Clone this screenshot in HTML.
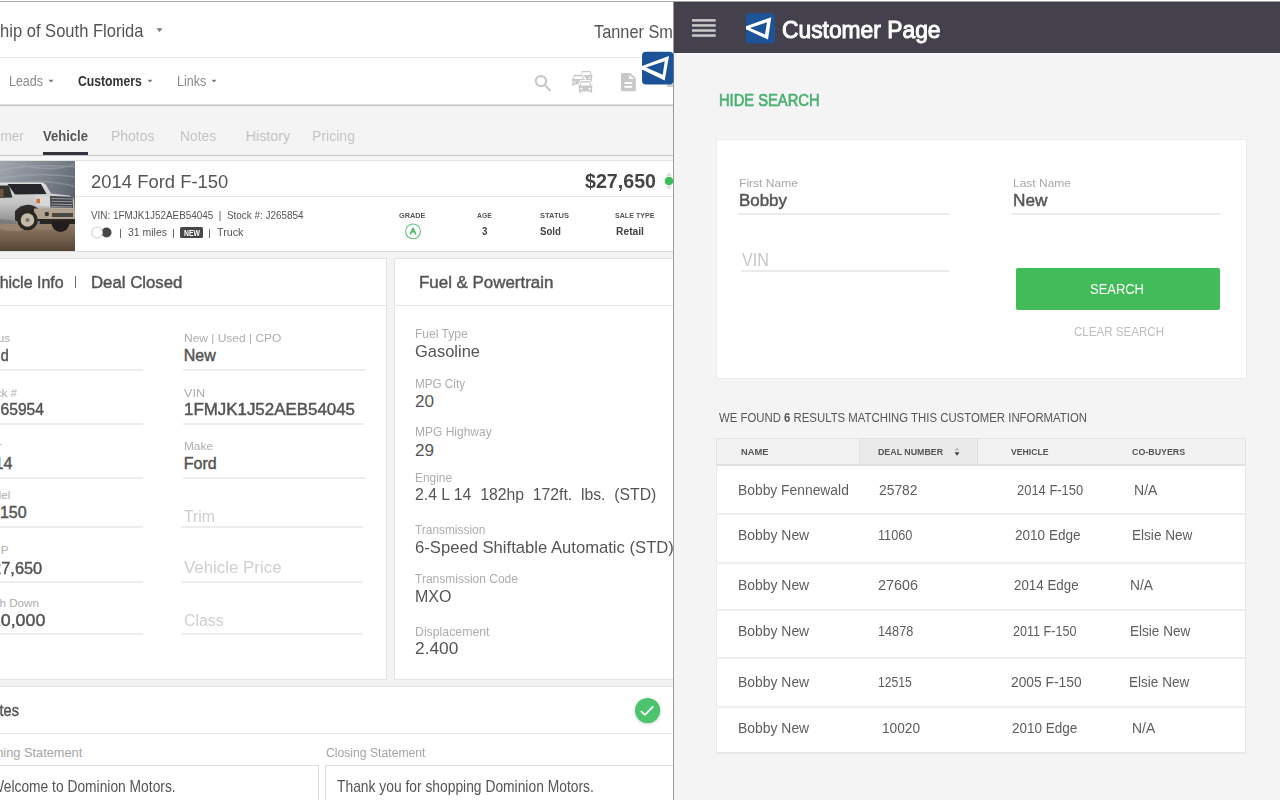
<!DOCTYPE html>
<html><head><meta charset="utf-8"><style>
html,body{margin:0;padding:0;width:1280px;height:800px;overflow:hidden;background:#fff;}
body{position:relative;font-family:"Liberation Sans",sans-serif;}
.r{position:absolute;}
.t{position:absolute;white-space:nowrap;line-height:1;}
</style></head><body>
<div class="r" style="left:0px;top:0px;width:1280px;height:800px;background:#ffffff;"></div>
<div class="r" style="left:0px;top:1px;width:1280px;height:1px;background:#a6a6a6;"></div>
<div class="t" style="left:-57.02px;top:23.00px;font-size:17.75px;color:#555;transform:scaleX(0.9322);transform-origin:0 0;">Dealership of South Florida</div>
<svg class="r" style="left:155px;top:27px" width="9" height="6"><path d="M1.5 1.3 L7.5 1.3 L4.5 5 Z" fill="#777"/></svg>
<div class="t" style="left:593.60px;top:23.00px;font-size:18.60px;color:#555;transform:scaleX(0.8783);transform-origin:0 0;">Tanner Smith</div>
<div class="r" style="left:0px;top:57px;width:673px;height:1px;background:#e8e8e8;"></div>
<div class="t" style="left:9.30px;top:75.00px;font-size:13.95px;color:#8a8a8a;transform:scaleX(0.8945);transform-origin:0 0;">Leads</div>
<div class="t" style="left:77.80px;top:75.00px;font-size:13.95px;color:#333;font-weight:bold;transform:scaleX(0.8755);transform-origin:0 0;">Customers</div>
<div class="t" style="left:176.60px;top:75.00px;font-size:13.95px;color:#8a8a8a;transform:scaleX(0.8966);transform-origin:0 0;">Links</div>
<svg class="r" style="left:48px;top:79px" width="6" height="4"><path d="M0.5 0.8 L5.5 0.8 L3 3.6 Z" fill="#777"/></svg>
<svg class="r" style="left:146.7px;top:79px" width="6" height="4"><path d="M0.5 0.8 L5.5 0.8 L3 3.6 Z" fill="#777"/></svg>
<svg class="r" style="left:210.7px;top:79px" width="6" height="4"><path d="M0.5 0.8 L5.5 0.8 L3 3.6 Z" fill="#777"/></svg>
<div class="r" style="left:0px;top:104px;width:673px;height:1px;background:#dedede;"></div>
<div class="r" style="left:0px;top:105px;width:673px;height:1px;background:#c6c6c6;"></div>
<div class="r" style="left:0px;top:106px;width:673px;height:49px;background:#f4f4f4;"></div>
<div class="t" style="left:-35.49px;top:129.00px;font-size:14.25px;color:#c4c4c4;transform:scaleX(0.9535);transform-origin:0 0;">Customer</div>
<div class="t" style="left:43.30px;top:129.00px;font-size:14.25px;color:#555;font-weight:bold;transform:scaleX(0.9141);transform-origin:0 0;">Vehicle</div>
<div class="t" style="left:110.50px;top:129.00px;font-size:14.25px;color:#c4c4c4;transform:scaleX(0.9805);transform-origin:0 0;">Photos</div>
<div class="t" style="left:179.80px;top:129.00px;font-size:14.25px;color:#c4c4c4;transform:scaleX(0.9724);transform-origin:0 0;">Notes</div>
<div class="t" style="left:245.70px;top:129.00px;font-size:14.25px;color:#c4c4c4;">History</div>
<div class="t" style="left:312.00px;top:129.00px;font-size:14.25px;color:#c4c4c4;transform:scaleX(0.9872);transform-origin:0 0;">Pricing</div>
<div class="r" style="left:43px;top:152px;width:45px;height:3px;background:#33333d;"></div>
<div class="r" style="left:0px;top:155px;width:673px;height:1px;background:#c9c9c9;"></div>
<div class="r" style="left:0px;top:156px;width:673px;height:644px;background:#f3f3f3;"></div>
<div class="r" style="left:0px;top:156px;width:673px;height:4px;background:#f7f7f7;"></div>
<svg class="r" style="left:530px;top:70px" width="24" height="24" viewBox="0 0 24 24">
<circle cx="10.95" cy="11.1" r="5.2" fill="none" stroke="#c6c6c6" stroke-width="2"/>
<path d="M14.8 15 L20 20.2" stroke="#c6c6c6" stroke-width="2" stroke-linecap="round"/></svg>
<svg class="r" style="left:565px;top:66px" width="35" height="30" viewBox="565 66 35 30">
<g transform="translate(579.6,71) scale(0.9)"><path d="M3.2 0 L11.2 0 Q12 0 12.3 0.8 L13.3 4.4 L14.4 4.4 L14.4 5.8 L13.8 5.8 L13.8 11.8 L11.8 11.8 L11.8 10.4 L2.6 10.4 L2.6 11.8 L0.6 11.8 L0.6 5.8 L0 5.8 L0 4.4 L1.1 4.4 L2.1 0.8 Q2.4 0 3.2 0 Z M3 1.5 L11.4 1.5 L12.2 4.4 L2.2 4.4 Z M1.8 7 L4.2 7.3 L4.2 8.6 L1.8 8.4 Z M12.6 7 L10.2 7.3 L10.2 8.6 L12.6 8.4 Z" fill="#c9c9c9" fill-rule="evenodd"/></g><g transform="translate(571.7,74.8) scale(0.93)"><path d="M3.2 0 L11.2 0 Q12 0 12.3 0.8 L13.3 4.4 L14.4 4.4 L14.4 5.8 L13.8 5.8 L13.8 11.8 L11.8 11.8 L11.8 10.4 L2.6 10.4 L2.6 11.8 L0.6 11.8 L0.6 5.8 L0 5.8 L0 4.4 L1.1 4.4 L2.1 0.8 Q2.4 0 3.2 0 Z" fill="#fff" stroke="#fff" stroke-width="2.37" stroke-linejoin="round"/><path d="M3.2 0 L11.2 0 Q12 0 12.3 0.8 L13.3 4.4 L14.4 4.4 L14.4 5.8 L13.8 5.8 L13.8 11.8 L11.8 11.8 L11.8 10.4 L2.6 10.4 L2.6 11.8 L0.6 11.8 L0.6 5.8 L0 5.8 L0 4.4 L1.1 4.4 L2.1 0.8 Q2.4 0 3.2 0 Z M3 1.5 L11.4 1.5 L12.2 4.4 L2.2 4.4 Z M1.8 7 L4.2 7.3 L4.2 8.6 L1.8 8.4 Z M12.6 7 L10.2 7.3 L10.2 8.6 L12.6 8.4 Z" fill="#c9c9c9" fill-rule="evenodd"/></g><g transform="translate(578.3,81) scale(1.0)"><path d="M3.2 0 L11.2 0 Q12 0 12.3 0.8 L13.3 4.4 L14.4 4.4 L14.4 5.8 L13.8 5.8 L13.8 11.8 L11.8 11.8 L11.8 10.4 L2.6 10.4 L2.6 11.8 L0.6 11.8 L0.6 5.8 L0 5.8 L0 4.4 L1.1 4.4 L2.1 0.8 Q2.4 0 3.2 0 Z" fill="#fff" stroke="#fff" stroke-width="2.20" stroke-linejoin="round"/><path d="M3.2 0 L11.2 0 Q12 0 12.3 0.8 L13.3 4.4 L14.4 4.4 L14.4 5.8 L13.8 5.8 L13.8 11.8 L11.8 11.8 L11.8 10.4 L2.6 10.4 L2.6 11.8 L0.6 11.8 L0.6 5.8 L0 5.8 L0 4.4 L1.1 4.4 L2.1 0.8 Q2.4 0 3.2 0 Z M3 1.5 L11.4 1.5 L12.2 4.4 L2.2 4.4 Z M1.8 7 L4.2 7.3 L4.2 8.6 L1.8 8.4 Z M12.6 7 L10.2 7.3 L10.2 8.6 L12.6 8.4 Z" fill="#c9c9c9" fill-rule="evenodd"/></g></svg>
<svg class="r" style="left:621px;top:73px" width="16" height="19" viewBox="0 0 16 19">
<path d="M1.3 0 L9.3 0 L14.8 5.3 L14.8 17 Q14.8 18.3 13.5 18.3 L1.3 18.3 Q0 18.3 0 17 L0 1.3 Q0 0 1.3 0 Z" fill="#c8c8c8"/>
<path d="M8.1 1.7 L8.1 6.1 L12.9 6.1 Z" fill="#fff"/>
<rect x="3.5" y="9.1" width="7.7" height="1.9" fill="#fff"/><rect x="3.5" y="12.9" width="7.7" height="1.9" fill="#fff"/></svg>
<div class="r" style="left:667px;top:84px;width:6px;height:3px;background:#d0d0d0;"></div>
<div class="r" style="left:0px;top:160px;width:673px;height:92px;background:#ffffff;border-top:1px solid #e2e2e2;border-bottom:1px solid #dcdcdc;box-sizing:border-box;"></div>
<svg class="r" style="left:0;top:161px" width="75" height="90" viewBox="0 0 75 90">
<defs>
<linearGradient id="sky" x1="0" y1="0" x2="1" y2="0.7"><stop offset="0" stop-color="#a3a8b0"/><stop offset="0.5" stop-color="#7d838d"/><stop offset="1" stop-color="#4b5260"/></linearGradient>
<linearGradient id="gnd" x1="0" y1="0" x2="0" y2="1"><stop offset="0" stop-color="#8d7964"/><stop offset="0.45" stop-color="#76634f"/><stop offset="1" stop-color="#4f3f31"/></linearGradient>
<linearGradient id="body" x1="0" y1="0" x2="0" y2="1"><stop offset="0" stop-color="#dedede"/><stop offset="0.55" stop-color="#c2c2c2"/><stop offset="1" stop-color="#8f8f8f"/></linearGradient>
<filter id="bl" x="-10%" y="-10%" width="120%" height="120%"><feGaussianBlur stdDeviation="0.45"/></filter>
</defs>
<g filter="url(#bl)">
<rect x="-2" y="-2" width="79" height="94" fill="url(#sky)"/>
<path d="M-2 10 Q30 2 77 6 M-2 18 Q35 10 77 16 M10 24 Q40 16 77 26 M20 4 Q55 12 77 2" stroke="#b0b5bc" stroke-width="1.5" fill="none" opacity="0.4"/>
<rect x="-2" y="63" width="79" height="29" fill="url(#gnd)"/>
<ellipse cx="14" cy="66" rx="16" ry="4" fill="#9c8a74" opacity="0.8"/>
<ellipse cx="45" cy="66" rx="12" ry="3" fill="#97846f" opacity="0.7"/>
<path d="M-2 21.5 L42 21.5 Q44 21.5 46 24 L51 32.5 L69 34.5 Q73.5 35.5 74 39 L75 58 L-2 61 Z" fill="url(#body)"/>
<path d="M7.5 23 L41 23 L46.5 33 L15 33.5 Z" fill="#25272b"/>
<path d="M-2 24.5 L9 24.5 L12.5 36.5 L-2 37 Z" fill="#33322f"/>
<path d="M-2 28 L3.5 28 L3.5 36.5 L-2 36.5 Z" fill="#6d5642"/>
<path d="M35 34.5 L49.5 35 L50 45.5 L37 44.5 Z" fill="#d8d8d8"/>
<path d="M36.5 37.8 L40 37.8 L40 42.6 L36.5 42 Z" fill="#cf6f2c"/>
<path d="M50 35 L72.5 35.8 L73 47 L50.5 46.5 Z" fill="#414449"/>
<path d="M51.5 37.5 L72 38 M51.5 40.3 L72 40.8 M51.5 43.1 L72 43.6 M51.5 45.6 L72 46" stroke="#b1b4b8" stroke-width="0.8"/>
<path d="M15 50 Q27 38 40 49 L40 60 L15 60 Z" fill="#2f2c29"/>
<path d="M34 47.5 L75 47.5 L75 58 L34 58 Z" fill="#b0a28e"/>
<circle cx="46.8" cy="53" r="2.2" fill="#3a3632"/>
<rect x="52" y="52" width="21" height="4" fill="#4a4845"/>
<path d="M40 58 L75 58 L75 63 L40 63 Z" fill="#2a2724"/>
<path d="M-2 58 L16 59.5 L16 63 L-2 63 Z" fill="#7d7d7d"/>
<circle cx="27.5" cy="59" r="10.3" fill="#2a2622"/>
<circle cx="27.5" cy="59" r="6.8" fill="#c2bba9"/>
<circle cx="27.5" cy="59" r="2" fill="#77706a"/>
<path d="M51.5 62 A9 9 0 0 0 69.5 62 L69.5 60 L51.5 60 Z" fill="#221e1b"/>
</g>
</svg>
<div class="t" style="left:91.20px;top:173.00px;font-size:18.60px;color:#555;transform:scaleX(0.9917);transform-origin:0 0;">2014 Ford F-150</div>
<div class="r" style="left:76px;top:196px;width:597px;height:1px;background:#e9e9e9;"></div>
<div class="t" style="left:584.70px;top:171.00px;font-size:20.95px;color:#454545;font-weight:bold;transform:scaleX(0.9388);transform-origin:0 0;">$27,650</div>
<svg class="r" style="left:662px;top:170px" width="12" height="22"><path d="M7 2 L10 6 L4 6 Z" fill="#dedede"/><path d="M7 20 L10 16 L4 16 Z" fill="#dedede"/><circle cx="7" cy="11" r="4.3" fill="#3dbd55"/></svg>
<div class="t" style="left:91.25px;top:210.00px;font-size:10.90px;color:#555;transform:scaleX(0.9102);transform-origin:0 0;">VIN: 1FMJK1J52AEB54045&nbsp; |&nbsp; Stock #: J265854</div>
<svg class="r" style="left:90px;top:226px" width="24" height="13"><circle cx="7" cy="6.5" r="5.3" fill="#fff" stroke="#ddd" stroke-width="1.2"/><circle cx="16.5" cy="6.5" r="5" fill="#464646"/><circle cx="7" cy="6.5" r="5.3" fill="#fff" stroke="#ddd" stroke-width="1.2"/></svg>
<div class="r" style="left:119.6px;top:228.5px;width:1.1px;height:9px;background:#6a6a6a;"></div>
<div class="t" style="left:128.00px;top:227.00px;font-size:11.35px;color:#555;transform:scaleX(0.9228);transform-origin:0 0;">31 miles</div>
<div class="r" style="left:173.2px;top:228.5px;width:1.1px;height:9px;background:#6a6a6a;"></div>
<div class="r" style="left:180px;top:227px;width:23px;height:11px;background:#474747;border-radius:1.5px;"></div>
<div class="t" style="left:183.50px;top:230.00px;font-size:8.15px;color:#fff;font-weight:bold;transform:scaleX(0.8415);transform-origin:0 0;">NEW</div>
<div class="r" style="left:209.3px;top:228.5px;width:1.1px;height:9px;background:#6a6a6a;"></div>
<div class="t" style="left:216.50px;top:227.00px;font-size:11.35px;color:#555;transform:scaleX(0.9480);transform-origin:0 0;">Truck</div>
<div class="t" style="left:399.20px;top:212.00px;font-size:7.85px;color:#555;font-weight:bold;transform:scaleX(0.9277);transform-origin:0 0;">GRADE</div>
<div class="t" style="left:477.00px;top:212.00px;font-size:7.85px;color:#555;font-weight:bold;transform:scaleX(0.8641);transform-origin:0 0;">AGE</div>
<div class="t" style="left:540.00px;top:212.00px;font-size:7.85px;color:#555;font-weight:bold;transform:scaleX(0.9591);transform-origin:0 0;">STATUS</div>
<div class="t" style="left:615.00px;top:212.00px;font-size:7.85px;color:#555;font-weight:bold;transform:scaleX(0.9055);transform-origin:0 0;">SALE TYPE</div>
<svg class="r" style="left:404px;top:222px" width="18" height="18"><circle cx="9" cy="9.4" r="7.4" fill="none" stroke="#5ac474" stroke-width="1.1"/><path d="M6.4 11.9 L9 6.2 L11.6 11.9 M7.5 9.9 L10.5 9.9" fill="none" stroke="#3cb85a" stroke-width="1.4" stroke-linejoin="round" stroke-linecap="round"/></svg>
<div class="t" style="left:482.00px;top:227.00px;font-size:10.05px;color:#444;font-weight:bold;transform:scaleX(0.9661);transform-origin:0 0;">3</div>
<div class="t" style="left:540.00px;top:227.00px;font-size:10.45px;color:#444;font-weight:bold;transform:scaleX(0.9275);transform-origin:0 0;">Sold</div>
<div class="t" style="left:615.50px;top:227.00px;font-size:10.45px;color:#444;font-weight:bold;transform:scaleX(0.9839);transform-origin:0 0;">Retail</div>
<div class="r" style="left:-2px;top:258px;width:389px;height:422px;background:#ffffff;border:1px solid #e4e4e4;box-sizing:border-box;"></div>
<div class="r" style="left:0px;top:305px;width:386px;height:1px;background:#e6e6e6;"></div>
<div class="t" style="left:-18.68px;top:275.00px;font-size:16.70px;color:#555;transform:scaleX(0.9575);transform-origin:0 0;-webkit-text-stroke:0.45px #555;">Vehicle Info</div>
<div class="r" style="left:74.6px;top:276px;width:1.7px;height:12px;background:#6e6e6e;"></div>
<div class="t" style="left:91.00px;top:275.00px;font-size:16.70px;color:#555;transform:scaleX(1.0058);transform-origin:0 0;-webkit-text-stroke:0.45px #555;">Deal Closed</div>
<div class="t" style="left:-12.02px;top:332.00px;font-size:11.65px;color:#adadad;">atus</div>
<div class="t" style="left:-19.79px;top:348.00px;font-size:16.00px;color:#555;transform:scaleX(0.8990);transform-origin:0 0;-webkit-text-stroke:0.45px #555;">Sold</div>
<div class="r" style="left:0px;top:369px;width:143px;height:2px;background:#ededed;"></div>
<div class="t" style="left:183.80px;top:332.00px;font-size:11.65px;color:#adadad;transform:scaleX(1.0280);transform-origin:0 0;">New | Used | CPO</div>
<div class="t" style="left:183.80px;top:348.00px;font-size:16.00px;color:#555;-webkit-text-stroke:0.45px #555;">New</div>
<div class="r" style="left:183px;top:369px;width:182px;height:2px;background:#ededed;"></div>
<div class="t" style="left:-4.37px;top:387.00px;font-size:11.65px;color:#adadad;">ck #</div>
<div class="t" style="left:-15.62px;top:402.00px;font-size:16.00px;color:#555;transform:scaleX(0.9777);transform-origin:0 0;-webkit-text-stroke:0.45px #555;">J265954</div>
<div class="r" style="left:0px;top:423px;width:143px;height:2px;background:#ededed;"></div>
<div class="t" style="left:183.80px;top:387.00px;font-size:11.65px;color:#adadad;transform:scaleX(1.0813);transform-origin:0 0;">VIN</div>
<div class="t" style="left:183.80px;top:402.00px;font-size:16.00px;color:#555;transform:scaleX(1.0563);transform-origin:0 0;-webkit-text-stroke:0.45px #555;">1FMJK1J52AEB54045</div>
<div class="r" style="left:183px;top:423px;width:182px;height:2px;background:#ededed;"></div>
<div class="t" style="left:-2.38px;top:440.00px;font-size:11.65px;color:#adadad;">r</div>
<div class="t" style="left:-23.20px;top:456.00px;font-size:16.00px;color:#555;-webkit-text-stroke:0.45px #555;">2014</div>
<div class="r" style="left:0px;top:477px;width:143px;height:2px;background:#ededed;"></div>
<div class="t" style="left:183.80px;top:440.00px;font-size:11.65px;color:#adadad;transform:scaleX(1.0179);transform-origin:0 0;">Make</div>
<div class="t" style="left:183.80px;top:456.00px;font-size:16.00px;color:#555;-webkit-text-stroke:0.45px #555;">Ford</div>
<div class="r" style="left:183px;top:477px;width:182px;height:2px;background:#ededed;"></div>
<div class="t" style="left:-11.73px;top:489.00px;font-size:11.65px;color:#adadad;">odel</div>
<div class="t" style="left:-15.20px;top:505.00px;font-size:16.00px;color:#555;-webkit-text-stroke:0.45px #555;">F-150</div>
<div class="r" style="left:0px;top:526px;width:143px;height:2px;background:#ededed;"></div>
<div class="t" style="left:184.00px;top:509.00px;font-size:16.70px;color:#cfcfcf;transform:scaleX(0.9461);transform-origin:0 0;">Trim</div>
<div class="r" style="left:181px;top:526px;width:182px;height:2px;background:#ededed;"></div>
<div class="t" style="left:-7.78px;top:544.00px;font-size:11.65px;color:#adadad;">RP</div>
<div class="t" style="left:-17.22px;top:561.00px;font-size:16.00px;color:#555;transform:scaleX(1.0240);transform-origin:0 0;-webkit-text-stroke:0.45px #555;">$27,650</div>
<div class="r" style="left:0px;top:581px;width:143px;height:2px;background:#ededed;"></div>
<div class="t" style="left:184.00px;top:560.00px;font-size:16.70px;color:#cfcfcf;transform:scaleX(1.0109);transform-origin:0 0;">Vehicle Price</div>
<div class="r" style="left:181px;top:581px;width:182px;height:2px;background:#ededed;"></div>
<div class="t" style="left:-6.33px;top:597.00px;font-size:11.65px;color:#adadad;">sh Down</div>
<div class="t" style="left:-18.68px;top:613.00px;font-size:16.00px;color:#555;transform:scaleX(1.1114);transform-origin:0 0;-webkit-text-stroke:0.45px #555;">$10,000</div>
<div class="r" style="left:0px;top:633px;width:143px;height:2px;background:#ededed;"></div>
<div class="t" style="left:184.00px;top:613.00px;font-size:16.70px;color:#cfcfcf;transform:scaleX(0.9483);transform-origin:0 0;">Class</div>
<div class="r" style="left:181px;top:633px;width:182px;height:2px;background:#ededed;"></div>
<div class="r" style="left:394px;top:258px;width:290px;height:422px;background:#ffffff;border:1px solid #e4e4e4;box-sizing:border-box;"></div>
<div class="r" style="left:395px;top:305px;width:290px;height:1px;background:#e6e6e6;"></div>
<div class="t" style="left:418.50px;top:275.00px;font-size:16.70px;color:#555;transform:scaleX(1.0133);transform-origin:0 0;-webkit-text-stroke:0.45px #555;">Fuel &amp; Powertrain</div>
<div class="t" style="left:414.90px;top:328.00px;font-size:12.80px;color:#adadad;transform:scaleX(0.9432);transform-origin:0 0;">Fuel Type</div>
<div class="t" style="left:414.90px;top:343.00px;font-size:17.15px;color:#555;transform:scaleX(0.9603);transform-origin:0 0;">Gasoline</div>
<div class="t" style="left:414.90px;top:378.00px;font-size:12.80px;color:#adadad;transform:scaleX(0.9131);transform-origin:0 0;">MPG City</div>
<div class="t" style="left:414.90px;top:393.00px;font-size:17.15px;color:#555;">20</div>
<div class="t" style="left:414.90px;top:426.00px;font-size:12.80px;color:#adadad;transform:scaleX(0.9376);transform-origin:0 0;">MPG Highway</div>
<div class="t" style="left:414.90px;top:442.00px;font-size:17.15px;color:#555;">29</div>
<div class="t" style="left:414.90px;top:472.00px;font-size:12.80px;color:#adadad;transform:scaleX(0.9283);transform-origin:0 0;">Engine</div>
<div class="t" style="left:414.90px;top:486.00px;font-size:17.15px;color:#555;transform:scaleX(0.9197);transform-origin:0 0;">2.4 L 14&nbsp; 182hp&nbsp; 172ft.&nbsp; lbs.&nbsp; (STD)</div>
<div class="t" style="left:414.90px;top:524.00px;font-size:12.80px;color:#adadad;transform:scaleX(0.9295);transform-origin:0 0;">Transmission</div>
<div class="t" style="left:414.90px;top:539.00px;font-size:17.15px;color:#555;transform:scaleX(0.9703);transform-origin:0 0;">6-Speed Shiftable Automatic (STD)</div>
<div class="t" style="left:414.90px;top:573.00px;font-size:12.80px;color:#adadad;transform:scaleX(0.9381);transform-origin:0 0;">Transmission Code</div>
<div class="t" style="left:414.90px;top:588.00px;font-size:17.15px;color:#555;transform:scaleX(0.9343);transform-origin:0 0;">MXO</div>
<div class="t" style="left:414.90px;top:626.00px;font-size:12.80px;color:#adadad;transform:scaleX(0.9607);transform-origin:0 0;">Displacement</div>
<div class="t" style="left:414.90px;top:640.00px;font-size:17.15px;color:#555;transform:scaleX(1.0112);transform-origin:0 0;">2.400</div>
<div class="r" style="left:-2px;top:686px;width:677px;height:120px;background:#ffffff;border:1px solid #e4e4e4;box-sizing:border-box;"></div>
<div class="t" style="left:-18.59px;top:703.00px;font-size:16.70px;color:#555;transform:scaleX(0.8708);transform-origin:0 0;-webkit-text-stroke:0.45px #555;">Notes</div>
<div class="r" style="left:0px;top:733px;width:673px;height:1px;background:#e8e8e8;"></div>
<svg class="r" style="left:633px;top:696px;filter:drop-shadow(0 1px 1.5px rgba(0,0,0,0.18))" width="30" height="30"><circle cx="14.6" cy="14.5" r="12.6" fill="#4cc46e"/><path d="M8.4 15.6 L11.9 18.9 L19.8 10.9" stroke="#fff" stroke-width="1.7" fill="none" stroke-linecap="round" stroke-linejoin="round"/></svg>
<div class="t" style="left:-28.00px;top:747.00px;font-size:12.80px;color:#a5a5a5;">Opening Statement</div>
<div class="t" style="left:326.00px;top:747.00px;font-size:12.80px;color:#a5a5a5;transform:scaleX(0.9513);transform-origin:0 0;">Closing Statement</div>
<div class="r" style="left:-2px;top:765px;width:321px;height:40px;background:#fff;border:1px solid #dedede;box-sizing:border-box;"></div>
<div class="r" style="left:325px;top:765px;width:360px;height:40px;background:#fff;border:1px solid #dedede;box-sizing:border-box;"></div>
<div class="t" style="left:-9.49px;top:779.00px;font-size:15.70px;color:#555;transform:scaleX(0.8800);transform-origin:0 0;">Welcome to Dominion Motors.</div>
<div class="t" style="left:337.00px;top:779.00px;font-size:15.70px;color:#555;transform:scaleX(0.8817);transform-origin:0 0;">Thank you for shopping Dominion Motors.</div>
<div class="r" style="left:673px;top:1px;width:1px;height:799px;background:#9a9a9a;"></div>
<svg class="r" style="left:641px;top:51px" width="33" height="35" viewBox="0 0 33 35">
<defs><clipPath id="lc1"><rect x="1" y="0.75" width="31.5" height="32.8" rx="4"/></clipPath></defs>
<rect x="1" y="0.75" width="31.5" height="32.8" rx="4" fill="#1c5398"/>
<path clip-path="url(#lc1)" d="M-3 16.5 L28 5 L23.7 29.5 Z M5 16.5 L23.7 10.2 L21.7 23.7 Z" fill="#fff" fill-rule="evenodd"/></svg>
<div class="r" style="left:674px;top:2px;width:606px;height:798px;background:#f4f4f4;"></div>
<div class="r" style="left:674px;top:2px;width:606px;height:51px;background:#44414c;"></div>
<div class="r" style="left:674px;top:53px;width:606px;height:2px;background:#f8f8f8;"></div>
<div class="r" style="left:674px;top:2px;width:606px;height:1px;background:#3c3a43;"></div>
<svg class="r" style="left:688px;top:14px" width="32" height="28"><g fill="#c9c9c9"><rect x="4" y="5.1" width="23.7" height="2.5"/><rect x="4" y="10.17" width="23.7" height="2.5"/><rect x="4" y="15.24" width="23.7" height="2.5"/><rect x="4" y="20.3" width="23.7" height="2.5"/></g></svg>
<svg class="r" style="left:746px;top:12.5px" width="30" height="31" viewBox="0 0 30 31">
<defs><clipPath id="lc2"><rect x="0" y="0.2" width="29" height="30.3" rx="3.5"/></clipPath></defs>
<rect x="0" y="0.2" width="29" height="30.3" rx="3.5" fill="#1d5399"/>
<path clip-path="url(#lc2)" d="M-3.5 14.5 L25.3 4.2 L22 26.6 Z M4 15 L21 9.2 L19 21.5 Z" fill="#fff" fill-rule="evenodd"/></svg>
<div class="t" style="left:781.70px;top:18.00px;font-size:23.85px;color:#ffffff;transform:scaleX(0.9571);transform-origin:0 0;-webkit-text-stroke:1px #fff;">Customer Page</div>
<div class="t" style="left:718.90px;top:93.00px;font-size:16.70px;color:#49b072;transform:scaleX(0.8814);transform-origin:0 0;-webkit-text-stroke:0.7px #49b072;">HIDE SEARCH</div>
<div class="r" style="left:716px;top:139px;width:531px;height:240px;background:#ffffff;border:1px solid #ececec;box-sizing:border-box;"></div>
<div class="t" style="left:738.90px;top:177.00px;font-size:11.65px;color:#a8a8a8;transform:scaleX(1.0376);transform-origin:0 0;">First Name</div>
<div class="t" style="left:738.90px;top:193.00px;font-size:16.55px;color:#555;transform:scaleX(1.0228);transform-origin:0 0;-webkit-text-stroke:0.45px #555;">Bobby</div>
<div class="r" style="left:738px;top:213px;width:211px;height:2px;background:#ebebeb;"></div>
<div class="t" style="left:1012.50px;top:177.00px;font-size:11.65px;color:#a8a8a8;transform:scaleX(1.0296);transform-origin:0 0;">Last Name</div>
<div class="t" style="left:1012.50px;top:193.00px;font-size:16.55px;color:#555;transform:scaleX(1.0420);transform-origin:0 0;-webkit-text-stroke:0.45px #555;">New</div>
<div class="r" style="left:1012px;top:213px;width:208px;height:2px;background:#ebebeb;"></div>
<div class="t" style="left:741.60px;top:252.00px;font-size:17.45px;color:#c6c6c6;transform:scaleX(0.9282);transform-origin:0 0;">VIN</div>
<div class="r" style="left:741px;top:270px;width:208px;height:2px;background:#ebebeb;"></div>
<div class="r" style="left:1016px;top:268px;width:204px;height:42px;background:#42bc58;border-radius:2px;"></div>
<div class="t" style="left:1089.50px;top:281.00px;font-size:15.40px;color:#ffffff;transform:scaleX(0.8414);transform-origin:0 0;">SEARCH</div>
<div class="t" style="left:1073.60px;top:326.00px;font-size:12.50px;color:#bdbdbd;transform:scaleX(0.9254);transform-origin:0 0;">CLEAR SEARCH</div>
<div class="t" style="left:719.00px;top:412.00px;font-size:12.50px;color:#555;transform:scaleX(0.9099);transform-origin:0 0;">WE FOUND <b>6</b> RESULTS MATCHING THIS CUSTOMER INFORMATION</div>
<div class="r" style="left:716px;top:438px;width:530px;height:316px;background:#ffffff;"></div>
<div class="r" style="left:716px;top:438px;width:530px;height:28px;background:#f2f2f2;border:1px solid #e3e3e3;border-bottom:2px solid #e0e0e0;box-sizing:border-box;"></div>
<div class="r" style="left:859px;top:439px;width:119px;height:25px;background:#eaeaea;border-left:1px solid #e0e0e0;border-right:1px solid #e0e0e0;box-sizing:border-box;"></div>
<div class="t" style="left:741.00px;top:447.00px;font-size:9.60px;color:#555;font-weight:bold;transform:scaleX(0.9729);transform-origin:0 0;">NAME</div>
<div class="t" style="left:877.60px;top:447.00px;font-size:9.60px;color:#555;font-weight:bold;transform:scaleX(0.9200);transform-origin:0 0;">DEAL NUMBER</div>
<div class="t" style="left:1010.80px;top:447.00px;font-size:9.60px;color:#555;font-weight:bold;transform:scaleX(0.9037);transform-origin:0 0;">VEHICLE</div>
<div class="t" style="left:1131.80px;top:447.00px;font-size:9.60px;color:#555;font-weight:bold;transform:scaleX(0.9235);transform-origin:0 0;">CO-BUYERS</div>
<svg class="r" style="left:954px;top:447px" width="6" height="10"><path d="M3 0.5 L5.5 3.6 L0.5 3.6 Z" fill="#bbb"/><path d="M3 8.8 L5.5 5.2 L0.5 5.2 Z" fill="#444"/></svg>
<div class="r" style="left:716px;top:465px;width:1px;height:289px;background:#e8e8e8;"></div>
<div class="r" style="left:1245px;top:465px;width:1px;height:289px;background:#e8e8e8;"></div>
<div class="r" style="left:716px;top:513px;width:530px;height:2px;background:#eeeeee;"></div>
<div class="r" style="left:716px;top:561.5px;width:530px;height:2px;background:#eeeeee;"></div>
<div class="r" style="left:716px;top:608.5px;width:530px;height:2px;background:#eeeeee;"></div>
<div class="r" style="left:716px;top:656.5px;width:530px;height:2px;background:#eeeeee;"></div>
<div class="r" style="left:716px;top:706px;width:530px;height:2px;background:#eeeeee;"></div>
<div class="r" style="left:716px;top:752px;width:530px;height:2px;background:#e8e8e8;"></div>
<div class="t" style="left:737.70px;top:483.00px;font-size:14.85px;color:#5e5e5e;transform:scaleX(0.9328);transform-origin:0 0;">Bobby Fennewald</div>
<div class="t" style="left:878.80px;top:483.00px;font-size:14.85px;color:#5e5e5e;transform:scaleX(0.9323);transform-origin:0 0;">25782</div>
<div class="t" style="left:1016.80px;top:483.00px;font-size:14.85px;color:#5e5e5e;transform:scaleX(0.8716);transform-origin:0 0;">2014 F-150</div>
<div class="t" style="left:1134.00px;top:483.00px;font-size:14.85px;color:#5e5e5e;transform:scaleX(0.9452);transform-origin:0 0;">N/A</div>
<div class="t" style="left:737.70px;top:528.00px;font-size:14.85px;color:#5e5e5e;transform:scaleX(0.9376);transform-origin:0 0;">Bobby New</div>
<div class="t" style="left:878.40px;top:528.00px;font-size:14.85px;color:#5e5e5e;transform:scaleX(0.8559);transform-origin:0 0;">11060</div>
<div class="t" style="left:1015.00px;top:528.00px;font-size:14.85px;color:#5e5e5e;transform:scaleX(0.9131);transform-origin:0 0;">2010 Edge</div>
<div class="t" style="left:1131.80px;top:528.00px;font-size:14.85px;color:#5e5e5e;transform:scaleX(0.9148);transform-origin:0 0;">Elsie New</div>
<div class="t" style="left:737.70px;top:578.00px;font-size:14.85px;color:#5e5e5e;transform:scaleX(0.9376);transform-origin:0 0;">Bobby New</div>
<div class="t" style="left:878.40px;top:578.00px;font-size:14.85px;color:#5e5e5e;transform:scaleX(0.9686);transform-origin:0 0;">27606</div>
<div class="t" style="left:1013.60px;top:578.00px;font-size:14.85px;color:#5e5e5e;transform:scaleX(0.9005);transform-origin:0 0;">2014 Edge</div>
<div class="t" style="left:1129.50px;top:578.00px;font-size:14.85px;color:#5e5e5e;transform:scaleX(0.9291);transform-origin:0 0;">N/A</div>
<div class="t" style="left:737.70px;top:624.00px;font-size:14.85px;color:#5e5e5e;transform:scaleX(0.9376);transform-origin:0 0;">Bobby New</div>
<div class="t" style="left:878.40px;top:624.00px;font-size:14.85px;color:#5e5e5e;transform:scaleX(0.8548);transform-origin:0 0;">14878</div>
<div class="t" style="left:1012.60px;top:624.00px;font-size:14.85px;color:#5e5e5e;transform:scaleX(0.8470);transform-origin:0 0;">2011 F-150</div>
<div class="t" style="left:1130.40px;top:624.00px;font-size:14.85px;color:#5e5e5e;transform:scaleX(0.9133);transform-origin:0 0;">Elsie New</div>
<div class="t" style="left:737.70px;top:675.00px;font-size:14.85px;color:#5e5e5e;transform:scaleX(0.9376);transform-origin:0 0;">Bobby New</div>
<div class="t" style="left:878.40px;top:675.00px;font-size:14.85px;color:#5e5e5e;transform:scaleX(0.8185);transform-origin:0 0;">12515</div>
<div class="t" style="left:1010.80px;top:675.00px;font-size:14.85px;color:#5e5e5e;transform:scaleX(0.9308);transform-origin:0 0;">2005 F-150</div>
<div class="t" style="left:1128.60px;top:675.00px;font-size:14.85px;color:#5e5e5e;transform:scaleX(0.9133);transform-origin:0 0;">Elsie New</div>
<div class="t" style="left:737.70px;top:721.00px;font-size:14.85px;color:#5e5e5e;transform:scaleX(0.9376);transform-origin:0 0;">Bobby New</div>
<div class="t" style="left:881.90px;top:721.00px;font-size:14.85px;color:#5e5e5e;transform:scaleX(0.9226);transform-origin:0 0;">10020</div>
<div class="t" style="left:1011.70px;top:721.00px;font-size:14.85px;color:#5e5e5e;transform:scaleX(0.9089);transform-origin:0 0;">2010 Edge</div>
<div class="t" style="left:1131.80px;top:721.00px;font-size:14.85px;color:#5e5e5e;transform:scaleX(0.9372);transform-origin:0 0;">N/A</div>
</body></html>
